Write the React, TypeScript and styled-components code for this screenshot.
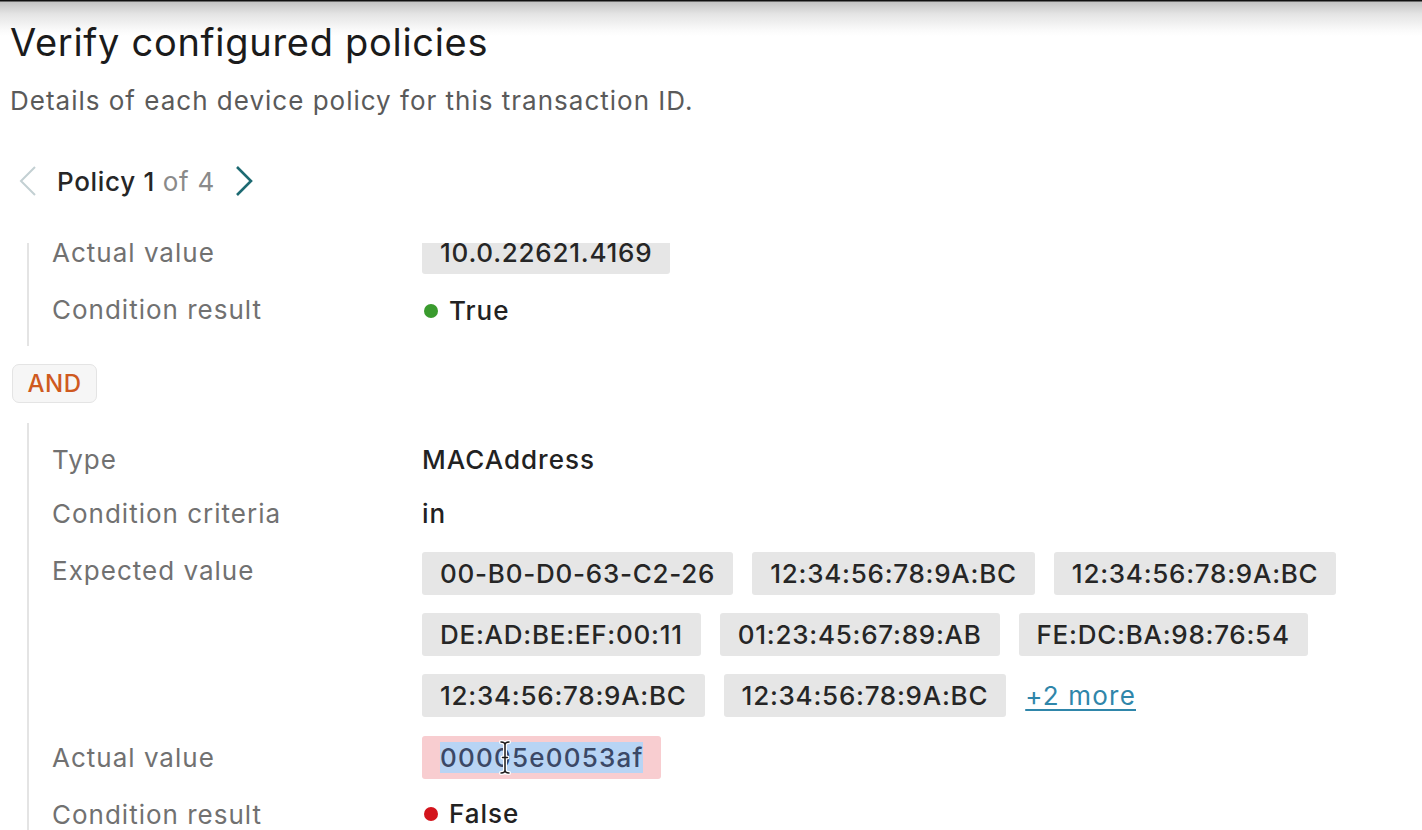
import React from 'react';
import styled, { createGlobalStyle } from 'styled-components';

const GlobalStyle = createGlobalStyle`
  html, body {
    margin: 0;
    padding: 0;
    background: #ffffff;
  }
  body {
    font-family: Inter, 'Noto Sans', 'Liberation Sans', sans-serif;
    -webkit-font-smoothing: antialiased;
  }
`;

const Page = styled.div`
  height: 830px;
  overflow: hidden;
  box-sizing: border-box;
  padding: 19px 0 0 10px;
  background: linear-gradient(
      to bottom,
      #111 0,
      #111 1px,
      #c4c4c4 2px,
      #e4e4e4 14px,
      #fafafa 30px,
      #ffffff 36px
    )
    no-repeat top left / 100% 36px;
`;

const Title = styled.h1`
  margin: 0;
  font-size: 38px;
  line-height: 46px;
  font-weight: 400;
  color: #1b1b1b;
  letter-spacing: 0.7px;
`;

const Subtitle = styled.p`
  margin: 21px 0 0;
  font-size: 26px;
  line-height: 30px;
  color: #5a5a5a;
  letter-spacing: 1px;
`;

const Pager = styled.div`
  display: flex;
  align-items: center;
  gap: 19px;
  margin: 45px 0 0 8px;
  height: 40px;
`;

const Chevron = styled.svg<{ $active?: boolean }>`
  width: 20px;
  height: 32px;
  flex: none;
  stroke: ${(p) => (p.$active ? '#1d6a72' : '#c3d0d3')};
  stroke-width: ${(p) => (p.$active ? 2.6 : 2)};
  fill: none;
`;

const PagerText = styled.span`
  font-size: 26px;
  font-weight: 500;
  color: #262626;
  letter-spacing: 0.7px;
`;

const PagerMuted = styled.span`
  color: #8a8a8a;
  font-weight: 400;
`;

const Scroller = styled.div`
  margin-top: 42px;
  height: 600px;
  overflow: hidden;
`;

const ScrollInner = styled.div`
  margin-top: -12px;
`;

const Group = styled.div<{ $top?: number; $bottom?: number; $gap: number }>`
  display: flex;
  flex-direction: column;
  gap: ${(p) => p.$gap}px;
  margin-left: 17px;
  padding: ${(p) => p.$top ?? 0}px 0 ${(p) => p.$bottom ?? 0}px 23px;
  border-left: 2px solid #e4e4e4;
`;

const Row = styled.div`
  display: grid;
  grid-template-columns: 370px 1fr;
  align-items: start;
`;

const Label = styled.div<{ $tall?: boolean; $drop?: number }>`
  font-size: 26px;
  line-height: ${(p) => (p.$tall ? 43 : 40)}px;
  padding-top: ${(p) => p.$drop ?? 0}px;
  color: #717171;
  letter-spacing: 1px;
  white-space: nowrap;
`;

const Value = styled.div`
  font-size: 26px;
  line-height: 40px;
  font-weight: 500;
  color: #222222;
  letter-spacing: 1px;
`;

const ChipList = styled.div`
  display: flex;
  flex-wrap: wrap;
  align-items: center;
  gap: 18px 19px;
  margin: 4px 0 5px;
  max-width: 930px;
`;

const Chip = styled.span<{ $tone?: 'neutral' | 'error' }>`
  position: relative;
  display: inline-flex;
  align-items: center;
  height: 43px;
  padding: 0 18px;
  background: ${(p) => (p.$tone === 'error' ? '#f8cdd0' : '#e6e6e6')};
  border-radius: 3px;
  font-size: 26px;
  font-weight: 500;
  color: #262626;
  letter-spacing: ${(p) => (p.$tone === 'error' ? 1.2 : 0.75)}px;
  white-space: nowrap;
`;

const Selected = styled.span`
  background: #b8d4f4;
  color: #3b4866;
`;

const Cursor = styled.svg`
  position: absolute;
  left: 77px;
  top: 4px;
  width: 12px;
  height: 35px;
`;

const MoreLink = styled.a`
  font-size: 26px;
  color: #2f86aa;
  text-decoration: underline;
  text-underline-offset: 4px;
  letter-spacing: 1.2px;
  cursor: pointer;
`;

const Status = styled.div`
  display: flex;
  align-items: center;
  gap: 11px;
  font-size: 26px;
  line-height: 40px;
  font-weight: 500;
  color: #222222;
  letter-spacing: 1px;
  padding: 1px 0 0 2px;
`;

const Dot = styled.span<{ $ok: boolean }>`
  width: 14px;
  height: 14px;
  border-radius: 50%;
  background: ${(p) => (p.$ok ? '#3a9b2e' : '#d3141c')};
`;

const AndBadge = styled.div`
  display: inline-flex;
  align-items: center;
  justify-content: center;
  box-sizing: border-box;
  width: 85px;
  height: 39px;
  margin: 18px 0 20px 2px;
  border: 1.5px solid #e4e4e4;
  border-radius: 7px;
  background: #f6f6f6;
  color: #cf5a1f;
  font-size: 24px;
  font-weight: 500;
  letter-spacing: 0.5px;
`;

const expected = [
  '00-B0-D0-63-C2-26',
  '12:34:56:78:9A:BC',
  '12:34:56:78:9A:BC',
  'DE:AD:BE:EF:00:11',
  '01:23:45:67:89:AB',
  'FE:DC:BA:98:76:54',
  '12:34:56:78:9A:BC',
  '12:34:56:78:9A:BC',
];

const beam =
  'M2 2 Q6 2 6 5 Q6 2 10 2 M6 5 V30 M2 33 Q6 33 6 30 Q6 33 10 33 M3.5 17.5 H8.5';

export default function App() {
  return (
    <>
      <GlobalStyle />
      <Page>
        <Title>Verify configured policies</Title>
        <Subtitle>Details of each device policy for this transaction ID.</Subtitle>

        <Pager>
          <Chevron viewBox="0 0 20 32">
            <polyline points="17,2 3,16 17,30" />
          </Chevron>
          <PagerText>
            Policy 1 <PagerMuted>of 4</PagerMuted>
          </PagerText>
          <Chevron viewBox="0 0 20 32" $active>
            <polyline points="3,2 17,16 3,30" />
          </Chevron>
        </Pager>

        <Scroller>
          <ScrollInner>
            <Group $gap={16} $bottom={15}>
              <Row>
                <Label $tall>Actual value</Label>
                <div>
                  <Chip>10.0.22621.4169</Chip>
                </div>
              </Row>
              <Row>
                <Label>Condition result</Label>
                <Status>
                  <Dot $ok />
                  True
                </Status>
              </Row>
            </Group>

            <AndBadge>AND</AndBadge>

            <Group $gap={14} $top={17}>
              <Row>
                <Label>Type</Label>
                <Value>MACAddress</Value>
              </Row>
              <Row>
                <Label>Condition criteria</Label>
                <Value>in</Value>
              </Row>
              <Row>
                <Label $drop={3}>Expected value</Label>
                <ChipList>
                  {expected.map((mac, i) => (
                    <Chip key={i}>{mac}</Chip>
                  ))}
                  <MoreLink>+2 more</MoreLink>
                </ChipList>
              </Row>
              <Row>
                <Label $tall>Actual value</Label>
                <div>
                  <Chip $tone="error">
                    <Selected>00005e0053af</Selected>
                    <Cursor viewBox="0 0 12 35">
                      <path d={beam} fill="none" stroke="#ffffff" strokeWidth="4" strokeLinecap="round" />
                      <path d={beam} fill="none" stroke="#1a1a1a" strokeWidth="1.5" strokeLinecap="round" />
                    </Cursor>
                  </Chip>
                </div>
              </Row>
              <Row>
                <Label $drop={2}>Condition result</Label>
                <Status>
                  <Dot $ok={false} />
                  False
                </Status>
              </Row>
            </Group>
          </ScrollInner>
        </Scroller>
      </Page>
    </>
  );
}
